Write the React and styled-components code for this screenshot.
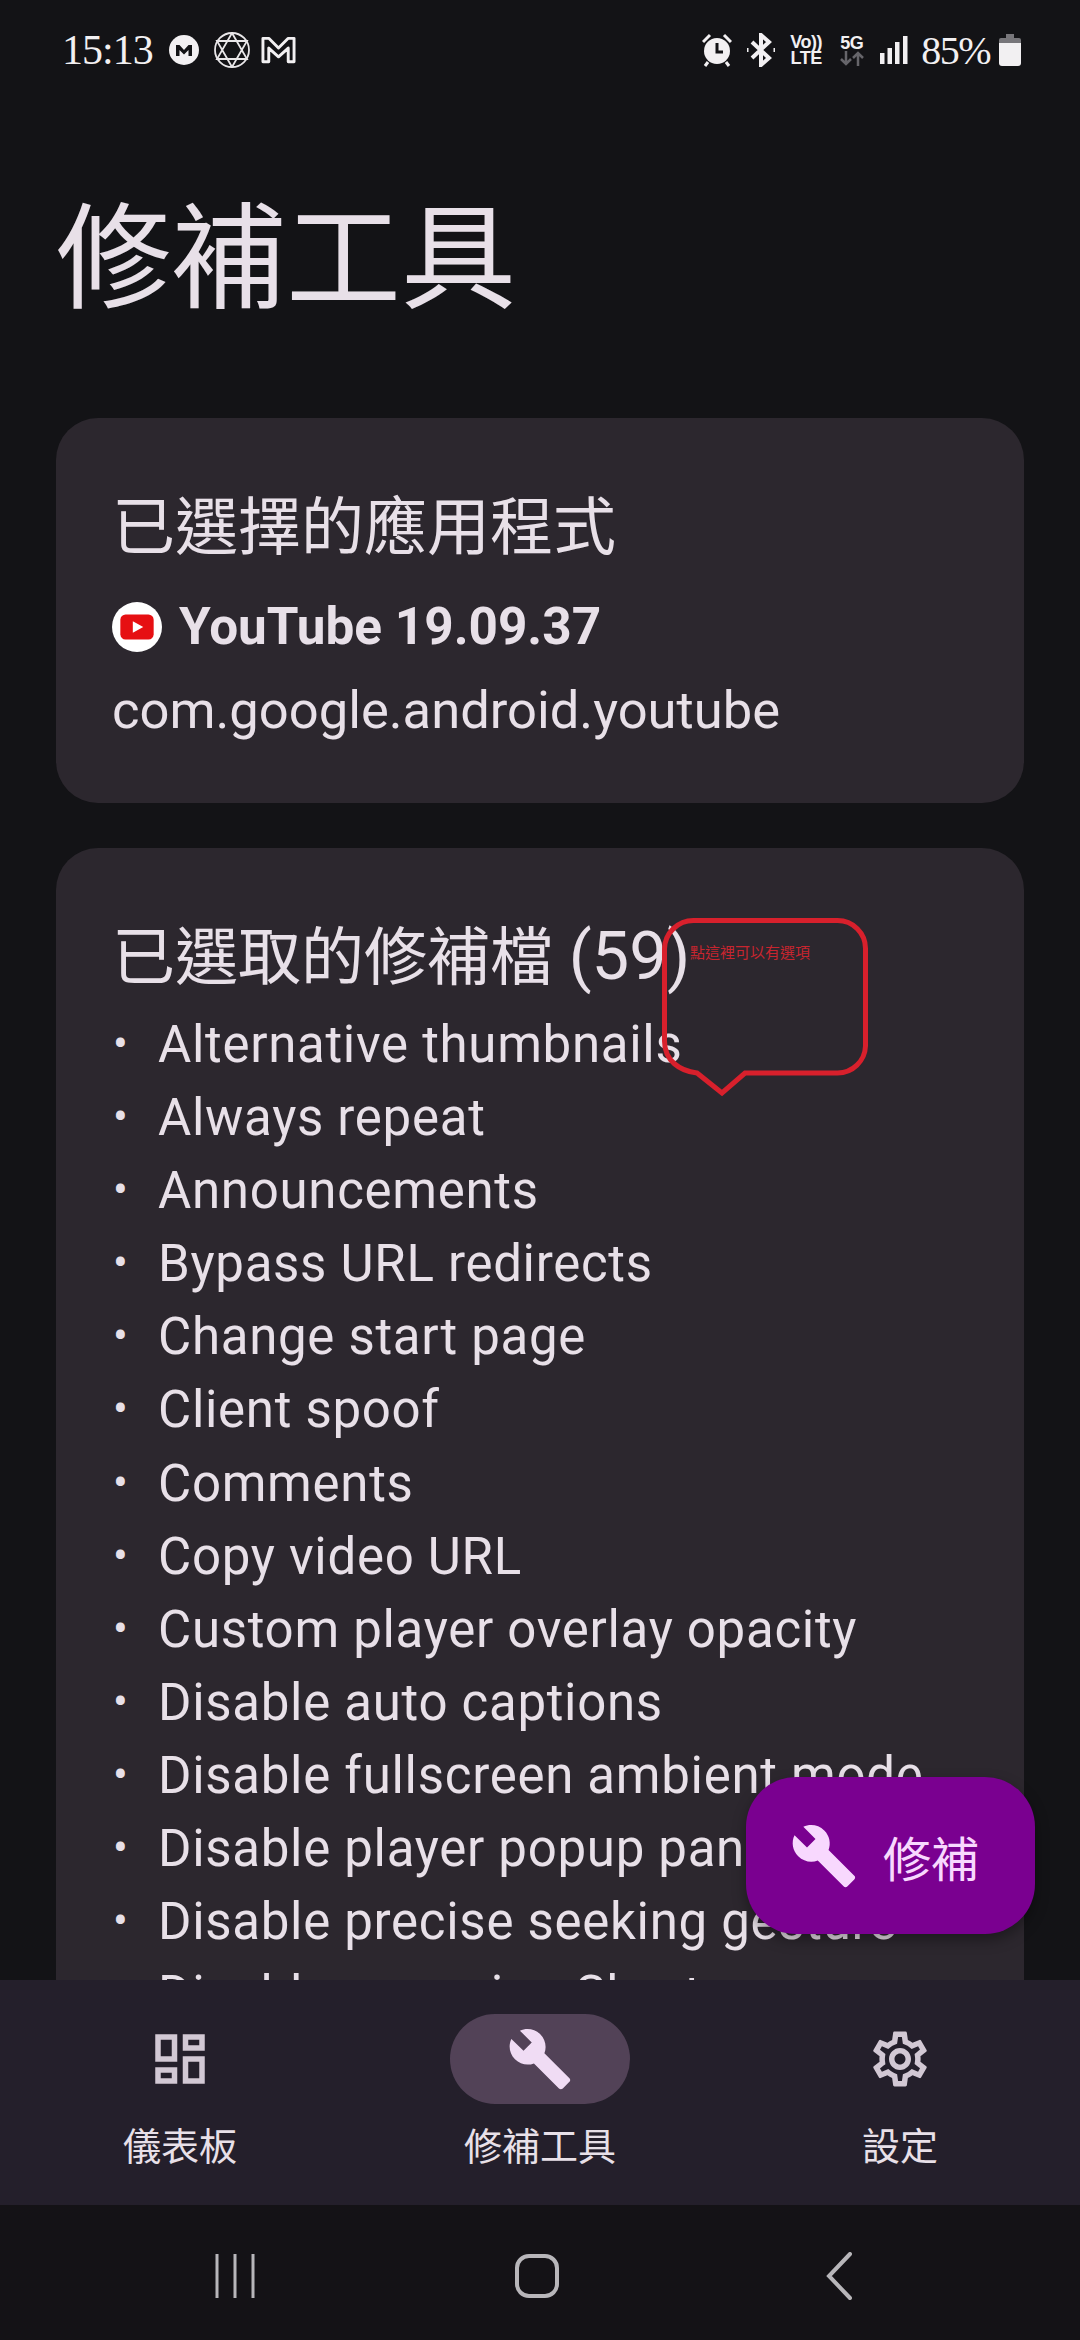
import React from 'react'
import styled, { createGlobalStyle } from 'styled-components'
import { MdBuild, MdOutlineDashboard, MdOutlineSettings } from 'react-icons/md'

const patches = [
  'Alternative thumbnails',
  'Always repeat',
  'Announcements',
  'Bypass URL redirects',
  'Change start page',
  'Client spoof',
  'Comments',
  'Copy video URL',
  'Custom player overlay opacity',
  'Disable auto captions',
  'Disable fullscreen ambient mode',
  'Disable player popup panels',
  'Disable precise seeking gesture',
  'Disable resuming Shorts',
]

function App() {
  return (
    <>
      <GlobalStyle />
      <Screen>
        <StatusBar>
          <StatusGroup>
            <Clock>15:13</Clock>
            <MegaIcon viewBox="0 0 30 30">
              <circle cx="15" cy="15" r="15" fill="#f2f0f2" />
              <path d="M7 21V10h3.500L15 15l4.500-5H23v11h-3.500v-6L15 19.500 10.500 15v6z" fill="#131316" />
            </MegaIcon>
            <StarIcon viewBox="0 0 36 36" fill="none" stroke="#e8e6e8" strokeWidth="1.800">
              <circle cx="18" cy="18" r="17" />
              <path d="M18 1 33 27H3zM18 35 3 9h30z" />
            </StarIcon>
            <GmailIcon viewBox="0 0 36 28" fill="none" stroke="#f2f0f2" strokeWidth="3" strokeLinejoin="round">
              <path d="M2 2h6l10 10L28 2h6v24h-6V12L18 21 8 12v14H2z" />
            </GmailIcon>
          </StatusGroup>
          <StatusGroup>
            <AlarmIcon viewBox="0 0 30 34">
              <circle cx="15" cy="18" r="13" fill="#f2f0f2" />
              <path d="M1 9 8 2M29 9 22 2" stroke="#f2f0f2" strokeWidth="3" />
              <path d="M6 29 3 33M24 29l3 4" stroke="#f2f0f2" strokeWidth="3" />
              <path d="M15 10v9h6" stroke="#131316" strokeWidth="3" fill="none" />
            </AlarmIcon>
            <BluetoothIcon viewBox="0 0 28 34" fill="none" stroke="#f2f0f2" strokeWidth="4">
              <path d="M5 9 22 25 14 32V2L22 9 5 25" />
              <path d="M0 15v4M28 15v4" strokeWidth="3" />
            </BluetoothIcon>
            <VoiceStack>
              <span>Vo))</span>
              <span>LTE</span>
            </VoiceStack>
            <DataStack>
              <span>5G</span>
              <Arrows viewBox="0 0 24 15" fill="none" strokeWidth="2.500">
                <path d="M6 0v13M1 8l5 5 5-5M18 15V2M13 7l5-5 5 5" stroke="#66656a" />
              </Arrows>
            </DataStack>
            <SignalIcon viewBox="0 0 28 28" fill="#f2f0f2">
              <rect x="0" y="17" width="4.500" height="11" />
              <rect x="7.500" y="12" width="4.500" height="16" />
              <rect x="15" y="6" width="4.500" height="22" />
              <rect x="23" y="0" width="4.500" height="28" />
            </SignalIcon>
            <Percent>85%</Percent>
            <BatteryIcon viewBox="0 0 22 32">
              <path d="M7 0h8v4h5a2 2 0 0 1 2 2v4H0V6a2 2 0 0 1 2-2h5z" fill="#77767a" />
              <path d="M0 9h22v20a3 3 0 0 1-3 3H3a3 3 0 0 1-3-3z" fill="#f2f0f2" />
            </BatteryIcon>
          </StatusGroup>
        </StatusBar>

        <Content>
          <Title>修補工具</Title>
          <Card>
            <CardTitle>已選擇的應用程式</CardTitle>
            <AppRow>
              <YoutubeIcon viewBox="0 0 48 48">
                <circle cx="24" cy="24" r="24" fill="#fff" />
                <rect x="8" y="12" width="32" height="24" rx="5" fill="#e60f12" />
                <path d="M20 18.500 30 24l-10 5.500z" fill="#fff" />
              </YoutubeIcon>
              <AppName>YouTube 19.09.37</AppName>
            </AppRow>
            <PackageName>com.google.android.youtube</PackageName>
          </Card>
          <PatchCard>
            <CardTitle>已選取的修補檔 <Count>(59)</Count></CardTitle>
            <PatchList>
              {patches.map((name) => (
                <PatchItem key={name}>{name}</PatchItem>
              ))}
            </PatchList>
          </PatchCard>
          <Callout viewBox="0 0 212 182" fill="none">
            <path
              d="M34 4.500H177a28 28 0 0 1 28.500 28.500V130a28 28 0 0 1-28 27H85L62 177 37 157C20 155 4.500 145 4.500 125V33A29 29 0 0 1 34 4.500z"
              stroke="#d8202c"
              strokeWidth="5"
            />
          </Callout>
          <CalloutText>點這裡可以有選項</CalloutText>
          <Fab>
            <FabIcon />
            <span>修補</span>
          </Fab>
        </Content>

        <BottomNav>
          <NavItem>
            <NavPill>
              <MdOutlineDashboard />
            </NavPill>
            <NavLabel>儀表板</NavLabel>
          </NavItem>
          <NavItem>
            <NavPill $active>
              <MdBuild />
            </NavPill>
            <NavLabel>修補工具</NavLabel>
          </NavItem>
          <NavItem>
            <NavPill>
              <MdOutlineSettings />
            </NavPill>
            <NavLabel>設定</NavLabel>
          </NavItem>
        </BottomNav>

        <SystemBar>
          <RecentsIcon viewBox="0 0 42 44" stroke="#b8b6ba" strokeWidth="3">
            <path d="M3 0v44M21 0v44M39 0v44" />
          </RecentsIcon>
          <HomeIcon />
          <BackIcon viewBox="0 0 26 48" fill="none" stroke="#b8b6ba" strokeWidth="4" strokeLinecap="round">
            <path d="M24 2 3 24l21 22" />
          </BackIcon>
        </SystemBar>
      </Screen>
    </>
  )
}

export default App

const GlobalStyle = createGlobalStyle`
  html, body {
    margin: 0;
    padding: 0;
    background: #131316;
  }
  * {
    box-sizing: border-box;
  }
`

const Screen = styled.div`
  width: 1080px;
  height: 2340px;
  display: flex;
  flex-direction: column;
  overflow: hidden;
  background: #131316;
  color: #e8e0e8;
  font-family: Roboto, "Noto Sans CJK TC", sans-serif;
`

const StatusBar = styled.div`
  height: 100px;
  flex: none;
  padding: 0 59px 0 62px;
  display: flex;
  align-items: center;
  justify-content: space-between;
`

const StatusGroup = styled.div`
  display: flex;
  align-items: center;
`

const Clock = styled.span`
  font-family: "Liberation Serif", serif;
  font-size: 42px;
  letter-spacing: -1px;
  color: #f2f0f2;
`

const MegaIcon = styled.svg`
  width: 30px;
  height: 30px;
  margin-left: 16px;
`

const StarIcon = styled.svg`
  width: 36px;
  height: 36px;
  margin-left: 15px;
`

const GmailIcon = styled.svg`
  width: 35px;
  height: 28px;
  margin-left: 11px;
`

const AlarmIcon = styled.svg`
  width: 30px;
  height: 34px;
`

const BluetoothIcon = styled.svg`
  width: 28px;
  height: 34px;
  margin-left: 15px;
`

const VoiceStack = styled.div`
  width: 32px;
  margin-left: 15px;
  display: flex;
  flex-direction: column;
  align-items: center;
  font-family: "Liberation Sans", sans-serif;
  font-weight: 700;
  font-size: 18px;
  line-height: 16px;
  letter-spacing: -0.5px;
  white-space: nowrap;
  color: #f2f0f2;
`

const DataStack = styled(VoiceStack)`
  width: 25px;
  margin-left: 17px;
`

const Arrows = styled.svg`
  width: 24px;
  height: 15px;
`

const SignalIcon = styled.svg`
  width: 28px;
  height: 28px;
  margin-left: 16px;
`

const Percent = styled.span`
  margin-left: 13px;
  font-family: "Liberation Serif", serif;
  font-size: 40px;
  letter-spacing: -1.500px;
  color: #f2f0f2;
`

const BatteryIcon = styled.svg`
  width: 22px;
  height: 32px;
  margin-left: 9px;
`

const Content = styled.div`
  position: relative;
  flex: 1;
  min-height: 0;
  overflow: hidden;
  padding: 0 56px;
`

const Title = styled.h1`
  margin: 93px 0 0;
  font-size: 115px;
  line-height: 134px;
  font-weight: 400;
  height: 225px;
`

const Card = styled.section`
  background: #2c272e;
  border-radius: 42px;
  padding: 74px 55px 0 56px;
  height: 385px;
`

const PatchCard = styled(Card)`
  height: auto;
  margin-top: 45px;
`

const CardTitle = styled.h2`
  margin: 0;
  font-size: 63px;
  line-height: 72px;
  font-weight: 400;
`

const Count = styled.span`
  font-size: 67px;
  line-height: 60px;
`

const AppRow = styled.div`
  display: flex;
  align-items: center;
  gap: 17px;
  margin: 33px 0 0;
`

const YoutubeIcon = styled.svg`
  width: 50px;
  height: 50px;
`

const AppName = styled.span`
  font-size: 51.300px;
  line-height: 60px;
  font-weight: 700;
`

const PackageName = styled.div`
  margin: 23px 0 0;
  font-size: 52.500px;
  line-height: 60px;
`

const PatchList = styled.ul`
  margin: 14px 0 0 -1px;
  padding: 0;
  list-style: none;
`

const PatchItem = styled.li`
  position: relative;
  height: 73.100px;
  padding-left: 47px;
  font-size: 51px;
  line-height: 73px;
  letter-spacing: 0.7px;
  white-space: nowrap;

  &::before {
    content: '•';
    position: absolute;
    left: 2px;
    font-size: 44px;
  }
`

const Callout = styled.svg`
  position: absolute;
  left: 660px;
  top: 816px;
  width: 212px;
  height: 182px;
`

const CalloutText = styled.span`
  position: absolute;
  left: 690px;
  top: 844px;
  font-size: 15px;
  line-height: 18px;
  color: #c7252f;
`

const Fab = styled.button`
  position: absolute;
  left: 746px;
  top: 1677px;
  width: 289px;
  height: 157px;
  padding: 0 12px 0 0;
  border: none;
  border-radius: 50px;
  background: #7a0090;
  color: #f8d8fe;
  display: flex;
  align-items: center;
  justify-content: center;
  gap: 25px;
  font-family: inherit;
  font-size: 48px;
  box-shadow: 0 6px 14px rgba(0, 0, 0, 0.35);
`

const FabIcon = styled(MdBuild)`
  width: 68px;
  height: 68px;
`

const BottomNav = styled.nav`
  flex: none;
  height: 225px;
  background: #241f2b;
  display: grid;
  grid-template-columns: repeat(3, 1fr);
`

const NavItem = styled.div`
  display: flex;
  flex-direction: column;
  align-items: center;
  padding-top: 34px;
`

const NavPill = styled.div`
  width: 180px;
  height: 90px;
  border-radius: 45px;
  display: flex;
  align-items: center;
  justify-content: center;
  font-size: 66px;
  color: ${(props) => (props.$active ? '#f0dcf4' : '#d2c8d4')};
  background: ${(props) => (props.$active ? '#524257' : 'transparent')};
`

const NavLabel = styled.span`
  margin-top: 18px;
  font-size: 38px;
  line-height: 50px;
`

const SystemBar = styled.div`
  flex: none;
  height: 135px;
  padding: 6px 6px 0 0;
  background: #141216;
  display: grid;
  grid-template-columns: repeat(3, 302px);
  justify-content: center;
  justify-items: center;
  align-items: center;
`

const RecentsIcon = styled.svg`
  width: 42px;
  height: 44px;
`

const HomeIcon = styled.div`
  width: 44px;
  height: 44px;
  border: 4px solid #b8b6ba;
  border-radius: 14px;
`

const BackIcon = styled.svg`
  width: 26px;
  height: 48px;
`
